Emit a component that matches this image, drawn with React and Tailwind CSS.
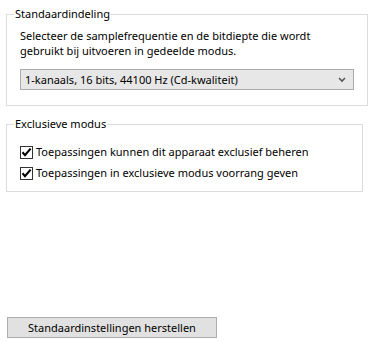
import React from "react";

function Check() {
  return (
    <span className="w-[13px] h-[13px] border border-[#333333] bg-white flex items-center justify-center shrink-0">
      <svg width="11" height="11" viewBox="0 0 11 11">
        <path d="M1.5 5.3 L4 8.2 L9.6 1.6" fill="none" stroke="#000" strokeWidth="2.1" />
      </svg>
    </span>
  );
}

export default function App() {
  return (
    <div
      className="w-[371px] h-[351px] bg-white flex flex-col text-[11px] text-black"
      style={{ fontFamily: '"Noto Sans", "Open Sans", sans-serif' }}
    >
      <fieldset className="ml-[6px] mt-[6px] w-[357px] border border-[#dcdcdc] px-[13px] pb-[15px]">
        <legend className="ml-[-6px] px-[1px] leading-[16px]">Standaardindeling</legend>
        <p className="mt-[6px] leading-[15px]">
          Selecteer de samplefrequentie en de bitdiepte die wordt
          <br />
          gebruikt bij uitvoeren in gedeelde modus.
        </p>
        <div className="mt-[11px] h-[21px] w-[334px] border border-[#acacac] bg-[#e7e7e7] flex items-center justify-between pl-[4px] pr-[7px]">
          <span className="leading-[15px]">1-kanaals, 16 bits, 44100 Hz (Cd-kwaliteit)</span>
          <svg width="8" height="6" viewBox="0 0 8 6">
            <path d="M1 1 L4 4 L7 1" fill="none" stroke="#555" strokeWidth="1.6" />
          </svg>
        </div>
      </fieldset>

      <fieldset className="ml-[6px] mt-[10px] w-[357px] border border-[#dcdcdc] px-[13px] pb-[10px]">
        <legend className="ml-[-6px] px-[1px] leading-[16px]">Exclusieve modus</legend>
        <div className="mt-[12px] flex flex-col gap-[5px]">
          <label className="flex items-center gap-[3px] h-[16px]">
            <Check />
            <span className="leading-[16px]">Toepassingen kunnen dit apparaat exclusief beheren</span>
          </label>
          <label className="flex items-center gap-[3px] h-[16px]">
            <Check />
            <span className="leading-[16px]">Toepassingen in exclusieve modus voorrang geven</span>
          </label>
        </div>
      </fieldset>

      <button className="mt-auto mb-[13px] ml-[7px] w-[210px] h-[21px] border border-[#adadad] bg-[#e1e1e1] flex items-center justify-center leading-[15px]">
        Standaardinstellingen herstellen
      </button>
    </div>
  );
}
